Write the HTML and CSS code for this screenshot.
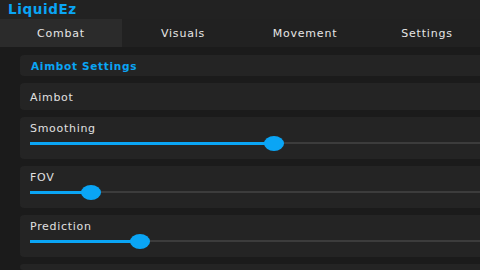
FILE: index.html
```html
<!doctype html>
<html lang="en">
<head>
    <meta charset="UTF-8">
    <title>LiquidEz</title>
    <link rel="stylesheet" href="styles.css">
</head>
<body>
<div id="app">
    <div class="title">LiquidEz</div>
    <div class="tabs">
        <div class="tab active">Combat</div>
        <div class="tab">Visuals</div>
        <div class="tab">Movement</div>
        <div class="tab">Settings</div>
    </div>
    <div class="content">
        <div class="card head">Aimbot Settings</div>
        <div class="card toggle">Aimbot</div>
        <div class="card slider">
            <div class="label">Smoothing</div>
            <div class="track"><div class="fill" style="width: 244px"></div></div>
        </div>
        <div class="card slider">
            <div class="label">FOV</div>
            <div class="track"><div class="fill" style="width: 61px"></div></div>
        </div>
        <div class="card slider">
            <div class="label">Prediction</div>
            <div class="track"><div class="fill" style="width: 110px"></div></div>
        </div>
        <div class="card last"></div>
    </div>
</div>
</body>
</html>
```

FILE: styles.css
```css
* {
    margin: 0;
    padding: 0;
    box-sizing: border-box;
}

body {
    background-color: #1b1b1b;
    font-family: "DejaVu Sans", "Noto Sans", sans-serif;
    width: 480px;
    height: 270px;
    overflow: hidden;
}

#app {
    width: 480px;
    height: 270px;
    overflow: hidden;
}

.title {
    height: 19px;
    padding-left: 8px;
    background-color: #222;
    color: #0aa5f5;
    font-size: 13.5px;
    font-weight: bold;
    line-height: 18px;
    letter-spacing: 0.6px;
}

.tabs {
    display: flex;
    width: 488px;
    height: 28px;
    background-color: #212121;
}

.tab {
    width: 122px;
    flex: none;
    text-align: center;
    line-height: 30px;
    color: #e6e6e6;
    font-size: 11px;
    letter-spacing: 0.8px;
}

.tab.active {
    background-color: #2b2b2b;
}

.content {
    display: flex;
    flex-direction: column;
    gap: 7px;
    padding: 8px 0 0 20px;
}

.card {
    width: 470px;
    flex: none;
    background-color: #242424;
    border-radius: 4px;
    color: #e0e0e0;
    font-size: 11px;
    letter-spacing: 0.7px;
    padding-left: 10px;
}

.head {
    height: 21px;
    line-height: 22px;
    color: #0aa5f5;
    font-weight: bold;
    padding-left: 11px;
    font-size: 10.5px;
}

.toggle {
    height: 27px;
    line-height: 29px;
}

.last {
    height: 6px;
}

.slider {
    height: 42px;
    padding-top: 5px;
}

.label {
    height: 14px;
    line-height: 14px;
}

.track {
    position: relative;
    margin-top: 6px;
    height: 2px;
    width: 450px;
    background-color: #3c3c3c;
}

.fill {
    position: absolute;
    left: 0;
    top: -0.5px;
    height: 3px;
    background-color: #0aa5f5;
}

.fill::after {
    content: "";
    position: absolute;
    right: -10px;
    top: -6px;
    width: 20px;
    height: 15px;
    border-radius: 50%;
    background-color: #0aa5f5;
}
```
